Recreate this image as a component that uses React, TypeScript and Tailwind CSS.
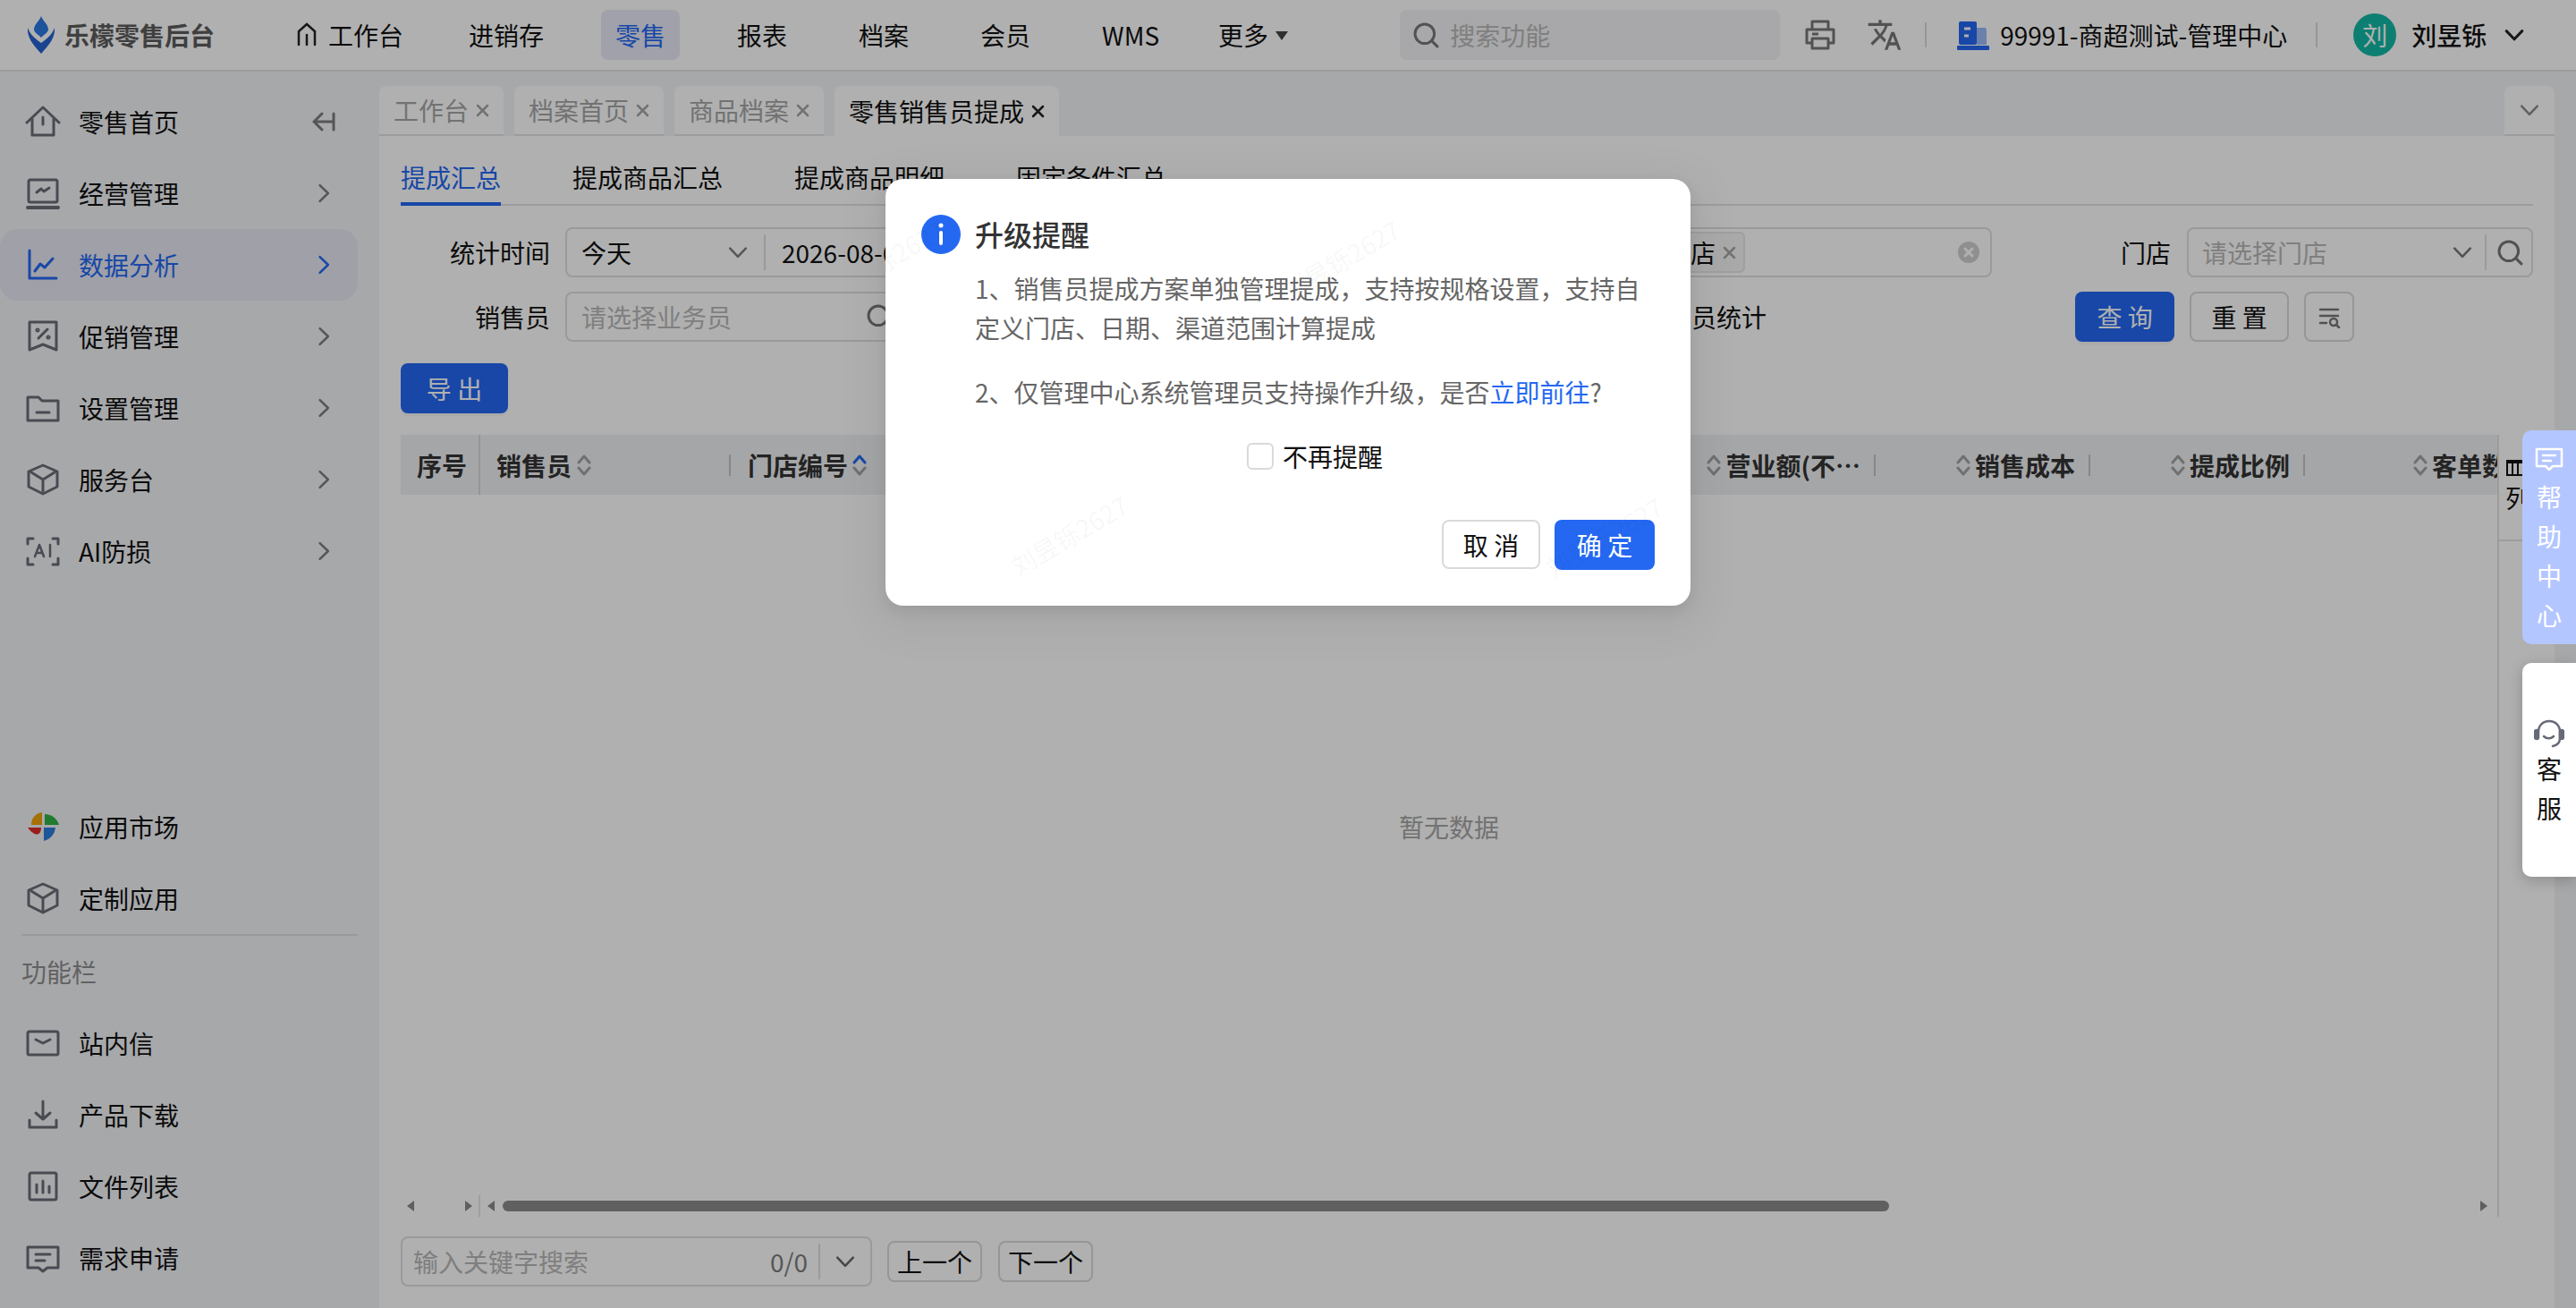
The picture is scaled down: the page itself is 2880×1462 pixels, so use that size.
import React from 'react';
import { MdTranslate } from 'react-icons/md';

const ICON = '#6b6d78';

const Svg: React.FC<{ size?: number; color?: string; sw?: number; children: React.ReactNode }> = ({ size = 40, color = ICON, sw = 3, children }) => (
  <svg width={size} height={size} viewBox={`0 0 ${size} ${size}`} fill="none" stroke={color} strokeWidth={sw} strokeLinecap="round" strokeLinejoin="round" className="shrink-0">
    {children}
  </svg>
);

const HomeIcon = () => (
  <Svg>
    <path d="M2 21 L20 4 L38 21" />
    <path d="M8 17 V35 H32 V17" />
    <path d="M20 15 V23" />
  </Svg>
);
const LaptopIcon = () => (
  <Svg>
    <rect x="4" y="5" width="32" height="25" rx="2" />
    <path d="M3 36 H37" strokeWidth="4" />
    <path d="M13 19 L18 15 L21 18 L27 14" />
  </Svg>
);
const ChartIcon = ({ color }: { color?: string }) => (
  <Svg color={color}>
    <path d="M5 4 V35 H35" />
    <path d="M11 27 L17 19 L22 23 L31 13" />
  </Svg>
);
const PromoIcon = () => (
  <Svg>
    <path d="M5 4 H35 V35 L20 29 L5 35 Z" />
    <path d="M25 12 L15 22" />
    <circle cx="14" cy="13" r="1" />
    <circle cx="26" cy="21" r="1" />
  </Svg>
);
const FolderIcon = () => (
  <Svg>
    <path d="M3 8 H15 L19 12 H37 V34 H3 Z" />
    <path d="M13 25 H27" />
  </Svg>
);
const CubeIcon = () => (
  <Svg>
    <path d="M20 4 L36 11 V28 L20 36 L4 28 V11 Z" />
    <path d="M7 12 L20 20 L33 12 M20 20 V33" />
  </Svg>
);
const AiIcon = () => (
  <Svg>
    <path d="M9 6 H3 V12 M31 6 H37 V12 M3 28 V35 H9 M37 28 V35 H31" />
    <path d="M11 26 L16 13 L21 26 M13 22 H19 M28 13 V26" strokeWidth="2.5" />
  </Svg>
);
const MarketIcon = () => (
  <svg width="40" height="40" viewBox="0 0 40 40" className="shrink-0">
    <path d="M19 4 V18 H7 C7 10 12 5 19 4 Z" fill="#f0a30a" />
    <path d="M22 6 C30 6 36 11 38 18 H22 Z" fill="#2fb344" />
    <path d="M3 21 H18 C18 29 12 33 3 21 Z" fill="#e02b2b" />
    <path d="M21 21 H34 C33 29 28 34 21 36 Z" fill="#2a7fde" />
  </svg>
);
const MailIcon = () => (
  <Svg>
    <rect x="3" y="7" width="34" height="26" rx="2" />
    <path d="M12 16 L20 20 L28 16" />
  </Svg>
);
const DownloadIcon = () => (
  <Svg>
    <path d="M20 5 V25 M12 18 L20 25 L28 18" />
    <path d="M5 26 V34 H35 V26" />
  </Svg>
);
const FilesIcon = () => (
  <Svg>
    <rect x="5" y="5" width="30" height="30" rx="2" />
    <path d="M13 18 V27 M20 14 V27 M27 20 V27" />
  </Svg>
);
const RequestIcon = () => (
  <Svg>
    <path d="M3 8 H37 V31 H25 L20 35 L15 31 H3 Z" />
    <path d="M12 16 H28 M12 23 H22" />
  </Svg>
);

const Chevron = ({ dir = 'right', color = '#7d7d7d', size = 22, sw = 2.5 }: { dir?: 'right' | 'down'; color?: string; size?: number; sw?: number }) => (
  <Svg size={size} color={color} sw={sw}>
    {dir === 'right' ? (
      <path d={`M${size * 0.3} ${size * 0.1} L${size * 0.72} ${size * 0.5} L${size * 0.3} ${size * 0.9}`} />
    ) : (
      <path d={`M${size * 0.1} ${size * 0.3} L${size * 0.5} ${size * 0.72} L${size * 0.9} ${size * 0.3}`} />
    )}
  </Svg>
);

const SearchGlyph = ({ size = 28, color = '#7a7a7a' }: { size?: number; color?: string }) => (
  <Svg size={size} color={color}>
    <circle cx={size * 0.46} cy={size * 0.46} r={size * 0.36} />
    <path d={`M${size * 0.72} ${size * 0.72} L${size * 0.93} ${size * 0.93}`} />
  </Svg>
);

const SortIcon = ({ active }: { active?: boolean }) => (
  <svg width="16" height="26" viewBox="0 0 16 26" fill="none" strokeWidth="3" strokeLinecap="round" strokeLinejoin="round" className="shrink-0">
    <path d="M2 10 L8 3 L14 10" stroke={active ? '#2468f2' : '#a3a3a3'} />
    <path d="M2 16 L8 23 L14 16" stroke="#a3a3a3" />
  </svg>
);

const Logo = () => (
  <svg width="32" height="42" viewBox="0 0 32 42" className="shrink-0">
    <path d="M16 0 C18 6 24 9 24 15 C24 18 20 20 16 24 C12 20 8 18 8 15 C8 9 14 6 16 0 Z" fill="#2b78e4" />
    <path d="M1 13 C3 18 5 22 16 30 C27 22 29 18 31 13 C32 24 25 32 16 42 C7 32 0 24 1 13 Z" fill="#2563cf" />
  </svg>
);

const NAV = ['进销存', '零售', '报表', '档案', '会员', 'WMS'];

const Header = () => (
  <header className="flex h-[80px] shrink-0 items-center border-b-2 border-[#e3e3e3] bg-white pl-[30px] pr-[40px] whitespace-nowrap">
    <Logo />
    <span className="ml-[10px] w-[165px] shrink-0 text-[28px] leading-[40px] font-bold text-[#5c5c5c]">乐檬零售后台</span>
    <div className="ml-[94px] flex shrink-0 items-center gap-[12px]">
      <svg width="24" height="30" viewBox="0 0 24 30" fill="none" stroke="#222" strokeWidth="2.5" strokeLinecap="round" className="shrink-0">
        <path d="M3 26 V11 L12 3 L21 11 V26" />
        <path d="M12 15 V26" />
      </svg>
      <span className="text-[28px] leading-[40px] text-[#111]">工作台</span>
    </div>
    <div className="ml-[57px] flex shrink-0 items-center gap-[48px]">
      {NAV.map((n) => (
        <span
          key={n}
          className={
            n === '零售'
              ? 'flex h-[56px] items-center rounded-[8px] bg-[#e8eaf6] px-[16px] text-[28px] text-[#2468f2]'
              : 'flex h-[56px] items-center px-[16px] text-[28px] text-[#111]'
          }
        >
          {n}
        </span>
      ))}
    </div>
    <div className="ml-[50px] flex shrink-0 items-center gap-[8px]">
      <span className="text-[28px] leading-[40px] text-[#111]">更多</span>
      <span className="mt-[2px] h-0 w-0 border-x-[7px] border-t-[10px] border-x-transparent border-t-[#444]" />
    </div>
    <div className="ml-[125px] flex h-[56px] w-[425px] shrink-0 items-center gap-[12px] rounded-[8px] bg-[#f3f4f6] pl-[14px]">
      <SearchGlyph size={30} color="#777" />
      <span className="text-[28px] text-[#b8b8b8]">搜索功能</span>
    </div>
    <svg width="36" height="36" viewBox="0 0 36 36" fill="none" stroke="#777" strokeWidth="3" strokeLinejoin="round" className="ml-[27px] shrink-0">
      <path d="M9 12 V3 H27 V12" />
      <path d="M9 27 H3 V12 H33 V27 H27" />
      <rect x="9" y="22" width="18" height="11" />
      <path d="M9 17 H16" />
    </svg>
    <MdTranslate size={40} color="#777" className="ml-[34px] shrink-0" />
    <span className="ml-[25px] h-[28px] w-[2px] shrink-0 bg-[#d9d9d9]" />
    <svg width="36" height="34" viewBox="0 0 36 34" className="ml-[34px] shrink-0">
      <rect x="2" y="2" width="20" height="26" rx="2" fill="#2468f2" />
      <path d="M22 9 H30 C33 9 33 11 33 13 V28 H22 Z" fill="#9bbcf8" />
      <path d="M8 10 H15 M8 18 H13" stroke="#fff" strokeWidth="3" />
      <rect y="29" width="36" height="5" rx="1" fill="#2468f2" />
    </svg>
    <span className="ml-[12px] text-[28px] leading-[40px] text-[#111]">99991-商超测试-管理中心</span>
    <span className="ml-[32px] h-[28px] w-[2px] shrink-0 bg-[#d9d9d9]" />
    <span className="ml-[40px] flex h-[48px] w-[48px] shrink-0 items-center justify-center rounded-full bg-[#14b8a6] text-[28px] text-white">刘</span>
    <span className="ml-[17px] text-[28px] leading-[40px] font-medium text-[#111]">刘昱铄</span>
    <span className="ml-[20px] flex">
      <Chevron dir="down" color="#222" size={22} sw={3} />
    </span>
  </header>
);

const MenuItem: React.FC<{ icon: React.ReactNode; label: string; arrow?: boolean; active?: boolean; extra?: React.ReactNode }> = ({ icon, label, arrow, active, extra }) => (
  <div className={active ? 'flex h-[80px] w-[400px] items-center rounded-[20px] bg-[#e6e8f3] pl-[28px] pr-[27px]' : 'flex h-[80px] w-[400px] items-center pl-[28px] pr-[27px]'}>
    {icon}
    <span className={active ? 'ml-[20px] flex-1 text-[28px] text-[#2468f2]' : 'ml-[20px] flex-1 text-[28px] text-[#111]'}>{label}</span>
    {arrow && <Chevron color={active ? '#2468f2' : '#7d7d7d'} />}
    {extra}
  </div>
);

const Sidebar = () => (
  <aside className="flex w-[424px] shrink-0 flex-col pt-[16px] pb-[16px]">
    <MenuItem
      icon={<HomeIcon />}
      label="零售首页"
      extra={
        <svg width="26" height="22" viewBox="0 0 26 22" fill="none" stroke="#7d7d7d" strokeWidth="3" strokeLinecap="round" strokeLinejoin="round" className="mr-[-2px]">
          <path d="M11 2 L2 11 L11 20 M2 11 H24 M24 2 V20" />
        </svg>
      }
    />
    <MenuItem icon={<LaptopIcon />} label="经营管理" arrow />
    <MenuItem icon={<ChartIcon color="#2468f2" />} label="数据分析" arrow active />
    <MenuItem icon={<PromoIcon />} label="促销管理" arrow />
    <MenuItem icon={<FolderIcon />} label="设置管理" arrow />
    <MenuItem icon={<CubeIcon />} label="服务台" arrow />
    <MenuItem icon={<AiIcon />} label="AI防损" arrow />
    <div className="mt-auto">
      <MenuItem icon={<MarketIcon />} label="应用市场" />
      <MenuItem icon={<CubeIcon />} label="定制应用" />
      <div className="ml-[24px] h-[82px] w-[376px] border-t-2 border-[#e0e0e0] pt-[20px] text-[28px] leading-[40px] text-[#8f8f8f]">功能栏</div>
      <MenuItem icon={<MailIcon />} label="站内信" />
      <MenuItem icon={<DownloadIcon />} label="产品下载" />
      <MenuItem icon={<FilesIcon />} label="文件列表" />
      <MenuItem icon={<RequestIcon />} label="需求申请" />
    </div>
  </aside>
);

const TabX = ({ dark }: { dark?: boolean }) => (
  <svg width="15" height="15" viewBox="0 0 15 15" fill="none" stroke={dark ? '#222' : '#a6a6a6'} strokeWidth="2.5" strokeLinecap="round" className="ml-[8px] shrink-0">
    <path d="M2 2 L13 13 M13 2 L2 13" />
  </svg>
);

const PageTabs = () => (
  <div className="flex h-[56px] shrink-0 items-stretch gap-[12px]">
    {['工作台', '档案首页', '商品档案'].map((t) => (
      <div key={t} className="flex items-center rounded-t-[8px] border-b-2 border-[#e3e3e3] bg-white px-[16px] text-[28px] whitespace-nowrap text-[#a6a6a6]">
        {t}
        <TabX />
      </div>
    ))}
    <div className="flex items-center rounded-t-[8px] bg-white px-[16px] text-[28px] whitespace-nowrap text-[#111]">
      零售销售员提成
      <TabX dark />
    </div>
    <div className="ml-auto flex w-[56px] items-center justify-center rounded-t-[8px] border-b-2 border-[#e3e3e3] bg-white">
      <Chevron dir="down" color="#8c8c8c" size={22} />
    </div>
  </div>
);

const Field: React.FC<{ className: string; children?: React.ReactNode }> = ({ className, children }) => (
  <div className={`flex h-[56px] shrink-0 items-center rounded-[8px] border-2 border-[#dfdfdf] ${className}`}>{children}</div>
);

const Label: React.FC<{ className: string; text: string }> = ({ className, text }) => (
  <span className={`shrink-0 text-right text-[28px] text-[#111] ${className}`}>{text}</span>
);

const Filters = () => (
  <div className="mt-[24px] flex flex-col gap-[16px]">
    <div className="flex items-center">
      <Label className="w-[167px]" text="统计时间" />
      <Field className="ml-[17px] w-[620px] pl-[16px]">
        <span className="w-[164px] text-[28px] text-[#111]">今天</span>
        <Chevron dir="down" size={22} />
        <span className="ml-[18px] h-[40px] w-[2px] bg-[#dfdfdf]" />
        <span className="ml-[18px] text-[28px] whitespace-nowrap text-[#111]">2026-08-08</span>
      </Field>
      <Field className="ml-[48px] w-[927px] pl-[490px]">
        <span className="flex h-[46px] items-center rounded-[6px] border-2 border-[#e6e6e6] bg-[#f5f5f5] pl-[12px] pr-[8px] text-[28px] whitespace-nowrap text-[#111]">
          全部门店
          <TabX />
        </span>
        <svg width="24" height="24" viewBox="0 0 24 24" className="mr-[12px] ml-auto shrink-0">
          <circle cx="12" cy="12" r="12" fill="#cfcfcf" />
          <path d="M8 8 L16 16 M16 8 L8 16" stroke="#fff" strokeWidth="3" strokeLinecap="round" />
        </svg>
      </Field>
      <Label className="ml-[18px] w-[182px]" text="门店" />
      <Field className="ml-[18px] w-[387px] pl-[15px]">
        <span className="flex-1 text-[28px] text-[#b8b8b8]">请选择门店</span>
        <Chevron dir="down" color="#777" size={22} />
        <span className="ml-[14px] h-[40px] w-[2px] bg-[#dfdfdf]" />
        <span className="ml-[11px] mr-[9px] flex">
          <SearchGlyph size={30} color="#777" />
        </span>
      </Field>
    </div>
    <div className="flex items-center">
      <Label className="w-[167px]" text="销售员" />
      <Field className="ml-[17px] w-[372px] pl-[16px]">
        <span className="flex-1 text-[28px] text-[#b8b8b8]">请选择业务员</span>
        <span className="mr-[4px] flex">
          <SearchGlyph size={30} color="#777" />
        </span>
      </Field>
      <span className="ml-[803px] shrink-0 text-[28px] whitespace-nowrap text-[#111]">按销售员统计</span>
      <button className="ml-[345px] h-[56px] w-[111px] shrink-0 rounded-[8px] bg-[#2468f2] text-[28px] text-white shadow-[0_3px_0_rgba(0,0,0,0.03)]">查 询</button>
      <button className="ml-[17px] h-[56px] w-[111px] shrink-0 rounded-[8px] border-2 border-[#d9d9d9] bg-white text-[28px] text-[#111]">重 置</button>
      <button className="ml-[17px] flex h-[56px] w-[56px] shrink-0 items-center justify-center rounded-[8px] border-2 border-[#d9d9d9] bg-white">
        <svg width="26" height="26" viewBox="0 0 26 26" fill="none" stroke="#777" strokeWidth="2.5" strokeLinecap="round">
          <path d="M3 5 H23 M3 12 H23 M3 20 H10" />
          <circle cx="18" cy="19" r="4" />
          <path d="M21 22 L24 25" />
        </svg>
      </button>
    </div>
  </div>
);

const COLS = ['营业额(不…', '销售成本', '提成比例'];

const ColDivider = () => <span className="block h-[24px] w-[2px] shrink-0 bg-[#c4c4c4]" />;

const TableHead = () => (
  <div className="flex h-[67px] shrink-0 items-center overflow-hidden bg-[#f0f1f3] text-[28px] font-bold whitespace-nowrap text-[#333]">
    <div className="flex h-full w-[89px] shrink-0 items-center border-r-2 border-[#d9d9d9] pl-[18px]">序号</div>
    <div className="flex w-[280px] shrink-0 items-center pl-[18px]">
      销售员
      <span className="ml-[6px] flex">
        <SortIcon />
      </span>
      <span className="ml-auto">
        <ColDivider />
      </span>
    </div>
    <div className="flex w-[1040px] shrink-0 items-center pl-[19px]">
      门店编号
      <span className="ml-[5px] flex">
        <SortIcon active />
      </span>
    </div>
    {COLS.map((c) => (
      <div key={c} className="flex w-[240px] shrink-0 items-center justify-end">
        <SortIcon />
        <span className="ml-[5px]">{c}</span>
        <span className="ml-[15px]">
          <ColDivider />
        </span>
      </div>
    ))}
    <div className="ml-[121px] flex shrink-0 items-center">
      <SortIcon />
      <span className="ml-[5px]">客单数</span>
    </div>
  </div>
);

const Arrow = ({ dir }: { dir: 'l' | 'r' }) => (
  <span className={dir === 'l' ? 'block h-0 w-0 shrink-0 border-y-[6px] border-r-[8px] border-y-transparent border-r-[#8a8a8a]' : 'block h-0 w-0 shrink-0 border-y-[6px] border-l-[8px] border-y-transparent border-l-[#8a8a8a]'} />
);

const Table = () => (
  <div className="mt-[24px] flex h-[874px] w-[2384px] shrink-0">
    <div className="flex w-[2344px] shrink-0 flex-col">
      <TableHead />
      <div className="flex flex-1 items-center justify-center pb-[42px] text-[28px] text-[#a6a6a6]">暂无数据</div>
      <div className="flex h-[24px] shrink-0 items-center">
        <div className="flex h-full w-[89px] shrink-0 items-center justify-between border-r-2 border-[#e6e6e6] px-[7px]">
          <Arrow dir="l" />
          <Arrow dir="r" />
        </div>
        <span className="ml-[8px] flex">
          <Arrow dir="l" />
        </span>
        <div className="ml-[9px] h-[12px] w-[1550px] shrink-0 rounded-full bg-[#8b8b8b]" />
        <span className="ml-[661px] flex">
          <Arrow dir="r" />
        </span>
      </div>
    </div>
    <div className="w-[40px] shrink-0 border-l-2 border-[#e3e3e3]">
      <div className="h-[119px] border-b-2 border-[#e3e3e3] pl-[7px] pt-[28px]">
        <svg width="22" height="18" viewBox="0 0 22 18" fill="none" stroke="#111" strokeWidth="2" className="block">
          <path d="M1 3 H21 M2 3 V17 H20 V3 M8 3 V17 M14 3 V17" />
          <path d="M1 2 H21" strokeWidth="4" />
        </svg>
        <div className="mt-[2px] text-[28px] leading-[44px] whitespace-nowrap text-[#111]">列</div>
      </div>
    </div>
  </div>
);

const SearchBar = () => (
  <div className="mt-[22px] flex items-center">
    <div className="flex h-[56px] w-[527px] shrink-0 items-center rounded-[8px] border-2 border-[#dfdfdf] pl-[12px]">
      <span className="flex-1 text-[28px] text-[#b8b8b8]">输入关键字搜索</span>
      <span className="text-[28px] text-[#7d7d7d]">0/0</span>
      <span className="ml-[12px] h-[40px] w-[2px] bg-[#dfdfdf]" />
      <span className="ml-[17px] mr-[17px] flex">
        <Chevron dir="down" color="#666" size={22} />
      </span>
    </div>
    <button className="ml-[17px] h-[46px] w-[106px] rounded-[8px] border-2 border-[#d9d9d9] bg-white text-[28px] leading-[40px] text-[#111]">上一个</button>
    <button className="ml-[18px] h-[46px] w-[106px] rounded-[8px] border-2 border-[#d9d9d9] bg-white text-[28px] leading-[40px] text-[#111]">下一个</button>
  </div>
);

const Content = () => (
  <section className="h-[1310px] bg-white px-[24px]">
    <div className="flex h-[78px] items-end gap-[80px] border-b-2 border-[#e3e3e3]">
      <span className="mb-[-2px] flex h-[60px] items-center border-b-4 border-[#2468f2] text-[28px] text-[#2468f2]">提成汇总</span>
      <span className="flex h-[60px] items-center text-[28px] text-[#111]">提成商品汇总</span>
      <span className="flex h-[60px] items-center text-[28px] text-[#111]">提成商品明细</span>
      <span className="flex h-[60px] items-center text-[28px] text-[#111]">固定条件汇总</span>
    </div>
    <Filters />
    <button className="mt-[24px] block h-[56px] w-[120px] rounded-[8px] bg-[#2468f2] text-[28px] text-white shadow-[0_3px_0_rgba(0,0,0,0.03)]">导 出</button>
    <Table />
    <SearchBar />
  </section>
);

// watermark spots as they show on the dialog, in dialog coordinates
const MODAL_MARKS = [
  { x: 205, y: 398 },
  { x: 509, y: 90 },
  { x: 803, y: 400 },
  { x: 0, y: 90 },
];

const Modal = () => (
  <div className="absolute inset-0 z-30 flex justify-center bg-[rgba(0,0,0,0.31)] pt-[200px]">
    <div className="relative h-[477px] w-[900px] rounded-[20px] bg-white pt-[40px] pl-[40px] shadow-[0_12px_48px_16px_rgba(0,0,0,0.05),0_6px_16px_rgba(0,0,0,0.08)]">
      <div className="pointer-events-none absolute inset-0 overflow-hidden rounded-[20px]">
        {MODAL_MARKS.map((m, i) => (
          <span
            key={i}
            className="absolute -translate-x-1/2 -translate-y-1/2 -rotate-[30deg] text-[28px] whitespace-nowrap text-[rgba(0,0,0,0.04)]"
            style={{ left: m.x, top: m.y }}
          >
            刘昱铄2627
          </span>
        ))}
      </div>
      <div className="flex h-[44px] items-center">
        <svg width="44" height="44" viewBox="0 0 44 44" className="shrink-0">
          <circle cx="22" cy="22" r="22" fill="#2468f2" />
          <circle cx="22" cy="12" r="2.5" fill="#fff" />
          <rect x="20" y="18" width="4" height="16" rx="2" fill="#fff" />
        </svg>
        <span className="ml-[16px] -mt-[2px] text-[32px] font-medium text-[#333]">升级提醒</span>
      </div>
      <div className="mt-[16px] pl-[60px] pr-[40px] text-[28px] leading-[44px] text-[#666]">
        <p>1、销售员提成方案单独管理提成，支持按规格设置，支持自定义门店、日期、渠道范围计算提成</p>
        <p className="mt-[28px]">
          2、仅管理中心系统管理员支持操作升级，是否<span className="text-[#2468f2]">立即前往</span>?
        </p>
        <div className="mt-[28px] flex h-[44px] items-center justify-center">
          <span className="h-[30px] w-[30px] rounded-[6px] border-2 border-[#d9d9d9] bg-white" />
          <span className="ml-[10px] text-[#111]">不再提醒</span>
        </div>
      </div>
      <div className="mt-[49px] flex justify-end gap-[16px] pr-[40px]">
        <button className="h-[55px] w-[110px] rounded-[8px] border-2 border-[#d9d9d9] bg-white text-[28px] text-[#111]">取 消</button>
        <button className="h-[56px] w-[112px] rounded-[8px] bg-[#2468f2] text-[28px] text-white">确 定</button>
      </div>
    </div>
  </div>
);

const HelpDock = () => (
  <div className="absolute top-[481px] right-0 z-40 flex w-[60px] flex-col gap-[21px] text-[28px] leading-[44px]">
    <div className="flex h-[239px] flex-col items-center rounded-l-[10px] bg-[#b4c6ff] pt-[19px] text-white">
      <svg width="32" height="28" viewBox="0 0 32 28" fill="none" stroke="#fff" strokeWidth="2.5" strokeLinejoin="round" strokeLinecap="round" className="shrink-0">
        <path d="M2 2 H30 V21 H20 L16 25 L12 21 H2 Z" />
        <path d="M9 9 H23 M9 15 H18" />
      </svg>
      <span className="mt-[5px]">帮</span>
      <span>助</span>
      <span>中</span>
      <span>心</span>
    </div>
    <div className="flex h-[239px] flex-col items-center rounded-l-[10px] bg-white pt-[62px] text-[#111] shadow-[0_4px_16px_rgba(0,0,0,0.2)]">
      <svg width="34" height="34" viewBox="0 0 34 34" fill="none" stroke="#666a78" strokeWidth="2.5" strokeLinecap="round" className="shrink-0">
        <path d="M5 15 C5 8 10 3 17 3 C24 3 29 8 29 15 V22 C29 27 26 30 21 31" />
        <rect x="1" y="13" width="4" height="10" rx="2" fill="#666a78" />
        <rect x="29" y="13" width="4" height="10" rx="2" fill="#666a78" />
        <path d="M11 20 C14 23 19 23 22 20" />
      </svg>
      <span>客</span>
      <span>服</span>
    </div>
  </div>
);

// faint user watermark repeated over the page, under the dim layer
const MARKS: { x: number; y: number }[] = [];
for (let j = -1; j < 3; j++) {
  for (let i = 0; i < 5; i++) {
    MARKS.push({ x: 299 + 600 * i, y: 290 + 608 * j });
    MARKS.push({ x: 595 + 600 * i, y: 598 + 608 * j });
  }
}

const Watermark = () => (
  <div className="pointer-events-none absolute inset-0 z-20 overflow-hidden">
    {MARKS.map((m, i) => (
      <span
        key={i}
        className="absolute -translate-x-1/2 -translate-y-1/2 -rotate-[30deg] text-[28px] whitespace-nowrap text-[rgba(0,0,0,0.02)]"
        style={{ left: m.x, top: m.y }}
      >
        刘昱铄2627
      </span>
    ))}
  </div>
);

export default function App() {
  return (
    <div className="relative flex h-[1462px] w-[2880px] flex-col overflow-hidden bg-[#f2f3f6] font-['Noto_Sans_CJK_SC','Noto_Sans',sans-serif]">
      <Header />
      <div className="flex flex-1">
        <Sidebar />
        <main className="flex min-w-0 flex-1 flex-col pt-[16px] pr-[24px]">
          <PageTabs />
          <Content />
        </main>
      </div>
      <Watermark />
      <Modal />
      <HelpDock />
    </div>
  );
}
